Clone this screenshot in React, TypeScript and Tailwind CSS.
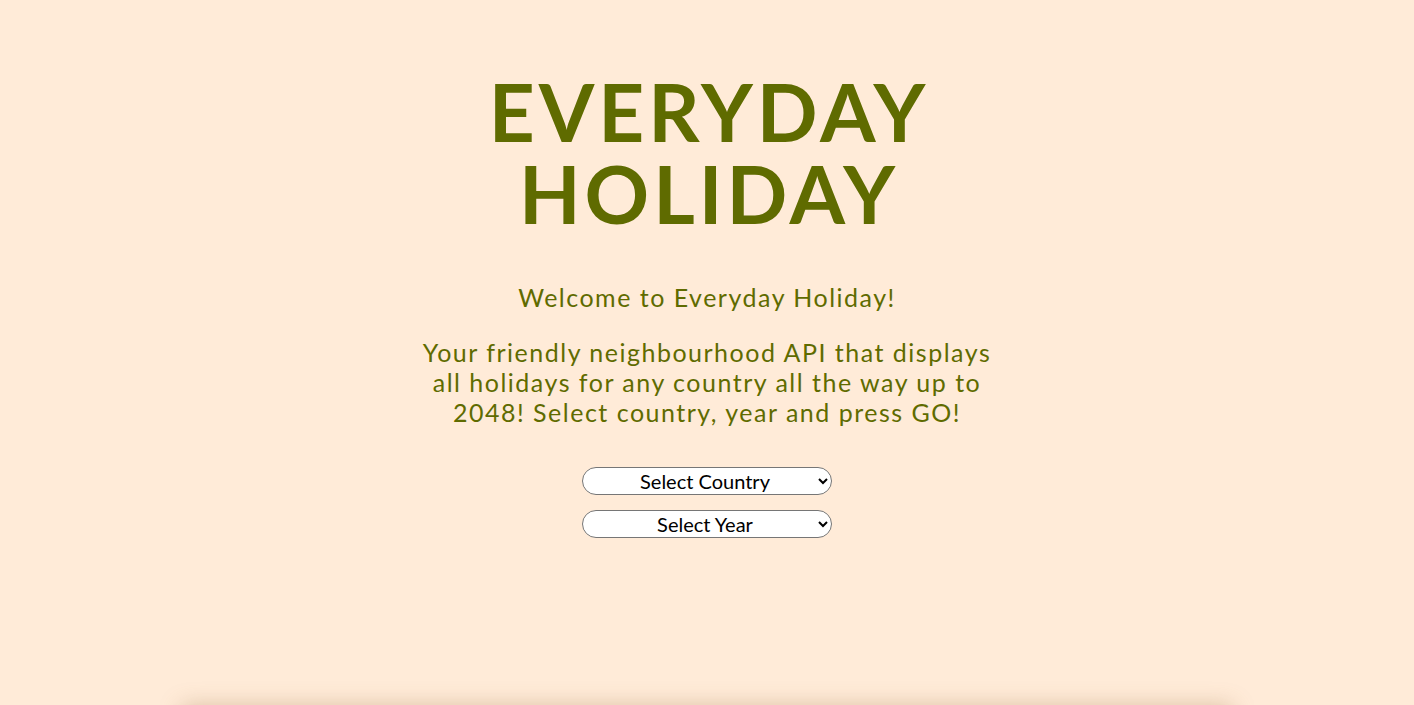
import React from "react";

const font = { fontFamily: "Lato, 'Open Sans', sans-serif" };

const App: React.FC = () => {
  return (
    <div className="h-screen bg-[#ffebd8] flex flex-col items-center overflow-hidden" style={font}>
      {/* 타이틀 */}
      <h1 className="mt-[70px] text-center text-[80px] leading-[82px] font-bold tracking-[4px] text-[#5f6b00] pl-[4px]">
        <span className="block">EVERYDAY</span>
        <span className="block">HOLIDAY</span>
      </h1>

      {/* 소개 */}
      <p className="mt-[48px] text-center text-[25px] leading-[30px] tracking-[1.5px] text-[#5f6b00]">
        Welcome to Everyday Holiday!
      </p>
      <p className="mt-[25px] text-center text-[25px] leading-[30px] tracking-[1.5px] text-[#5f6b00]">
        Your friendly neighbourhood API that displays
        <br />
        all holidays for any country all the way up to
        <br />
        2048! Select country, year and press GO!
      </p>

      {/* 선택 */}
      <div className="mt-[40px] flex flex-col gap-[15px]">
        <select className="w-[250px] h-[28px] rounded-full border border-[#767676] bg-white text-center text-[20px] text-black pl-2">
          <option>Select Country</option>
        </select>
        <select className="w-[250px] h-[28px] rounded-full border border-[#767676] bg-white text-center text-[20px] text-black pl-2">
          <option>Select Year</option>
        </select>
      </div>

      <div className="mt-[172px] w-[1050px] h-[40px] shrink-0 bg-[#ffebd8] shadow-[0_-4px_22px_rgba(150,110,60,0.35)]" />
    </div>
  );
};

export default App;
